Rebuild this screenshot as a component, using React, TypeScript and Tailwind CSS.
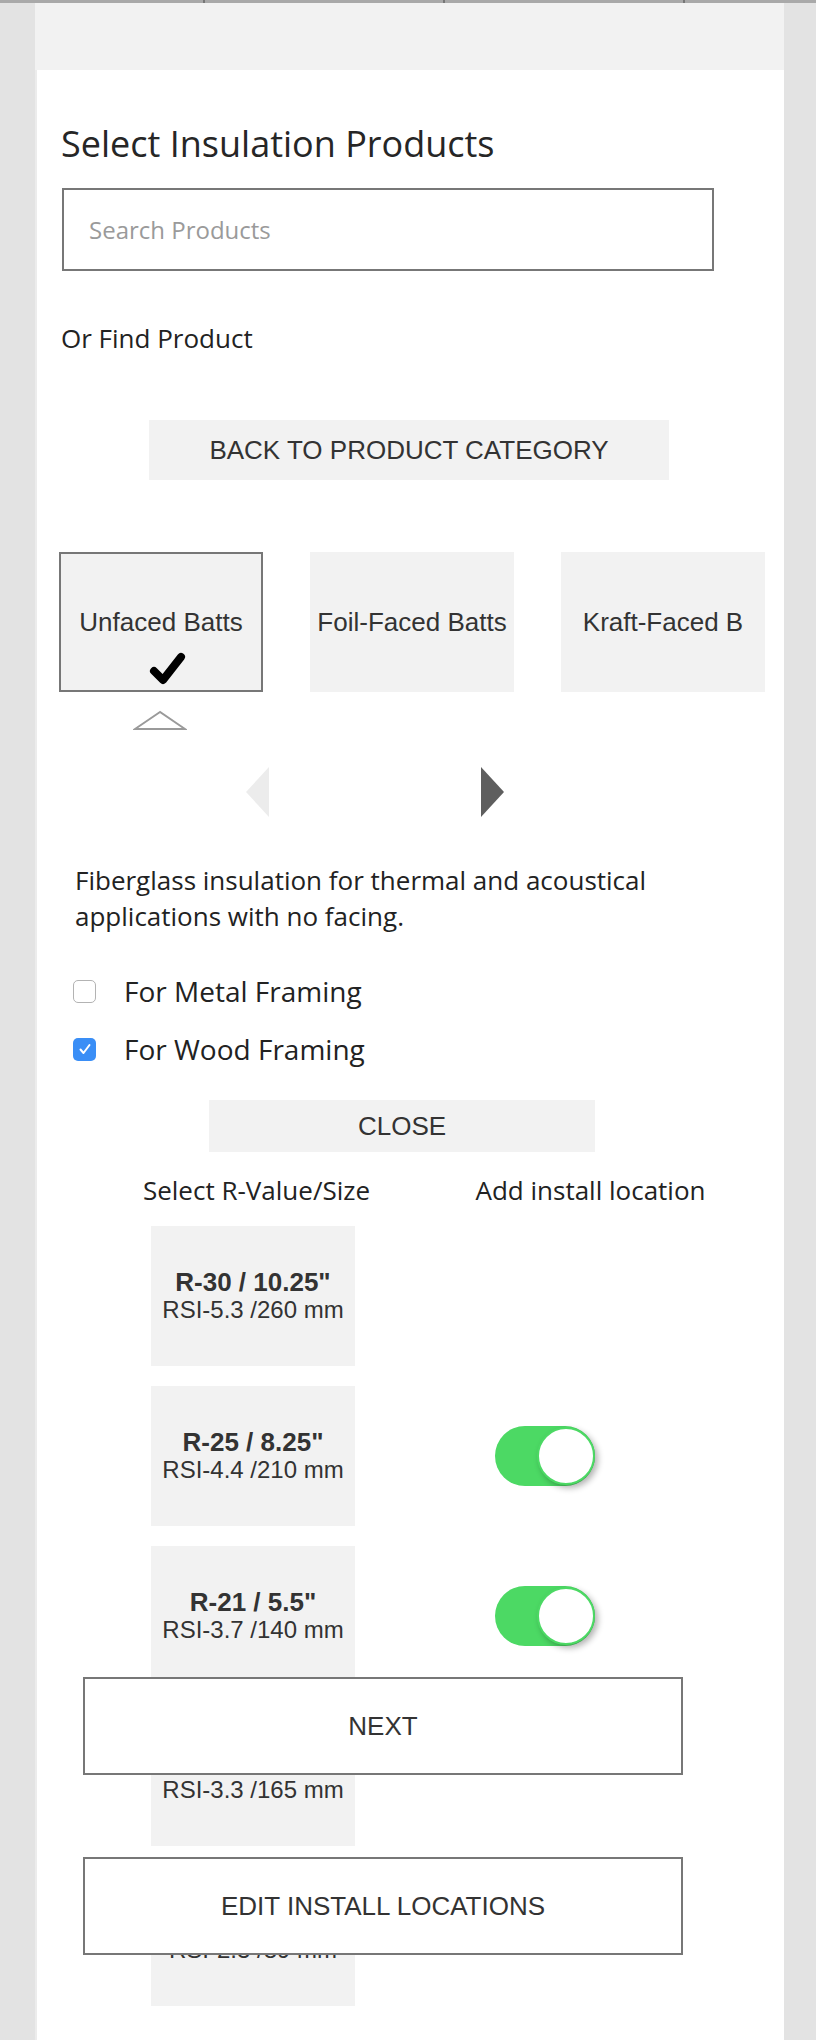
import React from "react";

const sans = { fontFamily: '"Open Sans", "Liberation Sans", sans-serif' };
const arial = { fontFamily: '"Liberation Sans", Arial, sans-serif' };

const sizes = [
  { r: 'R-30 / 10.25"', rsi: "RSI-5.3 /260 mm", on: false },
  { r: 'R-25 / 8.25"', rsi: "RSI-4.4 /210 mm", on: true },
  { r: 'R-21 / 5.5"', rsi: "RSI-3.7 /140 mm", on: true },
  { r: 'R-19 / 6.5"', rsi: "RSI-3.3 /165 mm", on: false },
  { r: 'R-13 / 3.5"', rsi: "RSI-2.3 /89 mm", on: false },
];

const HeavyCheck = () => (
  <svg width="40" height="36" viewBox="0 0 40 36">
    <path
      d="M7 21 L16 30 L34 7"
      fill="none"
      stroke="#000"
      strokeWidth="8"
      strokeLinecap="round"
      strokeLinejoin="round"
    />
  </svg>
);

const Toggle = () => (
  <div className="relative w-[100px] h-[60px] rounded-full bg-[#4cd964]">
    <div className="absolute right-0 top-[1px] w-[58px] h-[58px] rounded-full bg-white border-2 border-[#4cd964] shadow-[3px_3px_6px_rgba(0,0,0,0.3)]" />
  </div>
);

export default function App() {
  return (
    <div className="relative min-h-[2040px] bg-[#e3e3e3] text-[#222]" style={sans}>
      {/* top strip */}
      <div className="flex h-[3px] bg-[#a9a9a9]">
        <div className="w-[203px]" />
        <div className="w-[2px] bg-[#777]" />
        <div className="w-[238px]" />
        <div className="w-[2px] bg-[#777]" />
        <div className="w-[238px]" />
        <div className="w-[2px] bg-[#777]" />
      </div>

      <div className="ml-[35px] w-[749px] min-h-[2037px] flex flex-col">
        <div className="h-[67px] bg-[#f2f2f2]" />
        <div className="flex-1 bg-white border-l-2 border-[#ececec]">
          <h1 className="mt-[54px] ml-[24px] text-[36px] leading-[40px] font-normal text-[#262626]">
            Select Insulation Products
          </h1>

          <input
            placeholder="Search Products"
            className="block mt-[24px] ml-[25px] w-[652px] h-[83px] border-2 border-[#777] pl-[25px] text-[24px] outline-none placeholder:text-[#9a9a9a]"
            style={sans}
          />

          <p className="mt-[49px] ml-[24px] text-[26px] leading-[36px]">Or Find Product</p>

          <button
            className="block mt-[64px] ml-[112px] w-[520px] h-[60px] bg-[#f2f2f2] text-[26px] text-[#333]"
            style={arial}
          >
            BACK TO PRODUCT CATEGORY
          </button>

          {/* product type carousel */}
          <div className="mt-[72px] ml-[22px] flex gap-[47px] text-[26px] text-[#333]" style={arial}>
            <div className="relative w-[204px] h-[140px] bg-[#f2f2f2] border-2 border-[#777] flex items-center justify-center">
              Unfaced Batts
              <div className="absolute left-[86px] top-[96px]">
                <HeavyCheck />
              </div>
            </div>
            <div className="w-[204px] h-[140px] bg-[#f2f2f2] flex items-center justify-center">
              Foil-Faced Batts
            </div>
            <div className="w-[204px] h-[140px] bg-[#f2f2f2] flex items-center justify-center">
              Kraft-Faced B
            </div>
          </div>

          <svg className="block mt-[18px] ml-[96px]" width="54" height="20" viewBox="0 0 54 20">
            <polygon points="27,2 2,19 52,19" fill="#fff" stroke="#9a9a9a" strokeWidth="2" />
          </svg>

          <div className="mt-[37px] ml-[208px] flex h-[50px]">
            <svg width="24" height="50" viewBox="0 0 24 50">
              <polygon points="24,0 24,50 1,25" fill="#ececec" />
            </svg>
            <svg className="ml-[212px]" width="24" height="50" viewBox="0 0 24 50">
              <polygon points="0,0 0,50 23,25" fill="#5e5e5e" />
            </svg>
          </div>

          <p className="mt-[45px] ml-[38px] w-[660px] text-[26px] leading-[36px]">
            Fiberglass insulation for thermal and acoustical applications with no facing.
          </p>

          <div className="mt-[37px] ml-[36px] flex flex-col gap-[18px] text-[28px] leading-[40px]">
            <label className="flex items-center gap-[28px]">
              <span className="w-[23px] h-[23px] rounded-[5px] border border-[#b3b3b3] bg-white" />
              For Metal Framing
            </label>
            <label className="flex items-center gap-[28px]">
              <span className="w-[23px] h-[23px] rounded-[5px] bg-[#3a8ef6] flex items-center justify-center">
                <svg width="14" height="14" viewBox="0 0 14 14">
                  <path d="M2.5 7.5 L5.5 11 L11.5 3" fill="none" stroke="#fff" strokeWidth="2" strokeLinecap="round" strokeLinejoin="round" />
                </svg>
              </span>
              For Wood Framing
            </label>
          </div>

          <button
            className="block mt-[31px] ml-[172px] w-[386px] h-[52px] bg-[#f2f2f2] text-[26px] text-[#333]"
            style={arial}
          >
            CLOSE
          </button>

          <div className="mt-[20px] grid grid-cols-[439px_229px] text-[26px] leading-[36px]">
            <div className="flex justify-center whitespace-nowrap">Select R-Value/Size</div>
            <div className="flex justify-center whitespace-nowrap">Add install location</div>
          </div>

          <div className="mt-[18px] flex flex-col gap-[20px] pb-[34px]">
            {sizes.map((s) => (
              <div key={s.rsi} className="flex items-center">
                <div
                  className="ml-[114px] w-[204px] h-[140px] bg-[#f2f2f2] flex flex-col items-center justify-center text-[#333]"
                  style={arial}
                >
                  <div className="text-[26px] leading-[28px] font-bold">{s.r}</div>
                  <div className="text-[24px] leading-[28px]">{s.rsi}</div>
                </div>
                {s.on ? (
                  <div className="ml-[140px]">
                    <Toggle />
                  </div>
                ) : null}
              </div>
            ))}
          </div>
        </div>
      </div>

      {/* floating action buttons */}
      <button
        className="absolute left-[83px] top-[1677px] w-[600px] h-[98px] bg-white border-2 border-[#777] text-[26px] text-[#333]"
        style={arial}
      >
        NEXT
      </button>
      <button
        className="absolute left-[83px] top-[1857px] w-[600px] h-[98px] bg-white border-2 border-[#777] text-[26px] text-[#333]"
        style={arial}
      >
        EDIT INSTALL LOCATIONS
      </button>
    </div>
  );
}
